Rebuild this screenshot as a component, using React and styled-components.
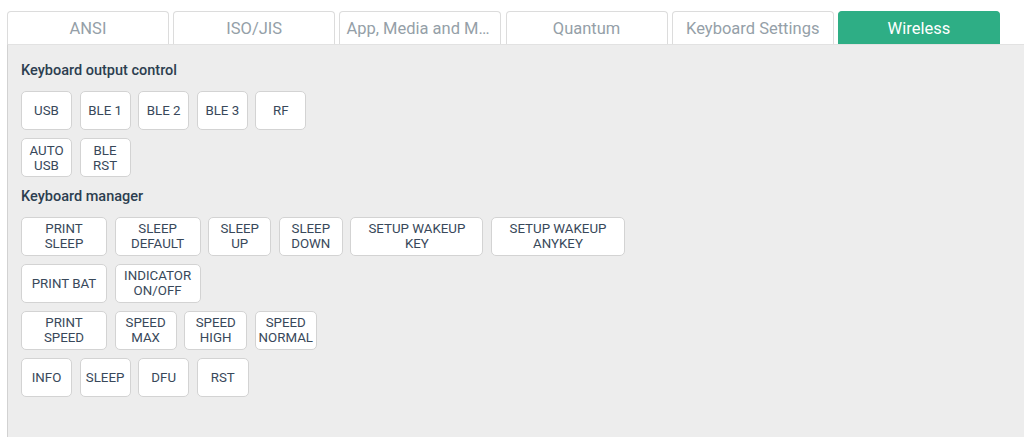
import React from 'react';
import styled, { createGlobalStyle } from 'styled-components';

const TABS = ['ANSI', 'ISO/JIS', 'App, Media and Mouse', 'Quantum', 'Keyboard Settings', 'Wireless'];
const ACTIVE_TAB = 'Wireless';

const SECTIONS = [
    {
        title: 'Keyboard output control',
        rows: [
            [['USB'], ['BLE 1'], ['BLE 2'], ['BLE 3'], ['RF']],
            [['AUTO', 'USB'], ['BLE', 'RST']],
        ],
    },
    {
        title: 'Keyboard manager',
        rows: [
            [
                ['PRINT', 'SLEEP', 86],
                ['SLEEP', 'DEFAULT', 86],
                ['SLEEP', 'UP', 63],
                ['SLEEP', 'DOWN', 64],
                ['SETUP WAKEUP', 'KEY', 133],
                ['SETUP WAKEUP', 'ANYKEY', 134],
            ],
            [['PRINT BAT', null, 86], ['INDICATOR', 'ON/OFF', 86]],
            [
                ['PRINT', 'SPEED', 86],
                ['SPEED', 'MAX', 62],
                ['SPEED', 'HIGH', 63],
                ['SPEED', 'NORMAL', 62],
            ],
            [['INFO'], ['SLEEP'], ['DFU'], ['RST', null, 52]],
        ],
    },
];

const GlobalStyle = createGlobalStyle`
    html, body {
        margin: 0;
        padding: 0;
        height: 100%;
        background: #ffffff;
        font-family: Roboto, "Liberation Sans", Arial, sans-serif;
    }
    #root {
        height: 100%;
    }
`;

const Page = styled.div`
    height: 437px;
    display: flex;
    flex-direction: column;
    padding: 11px 0 0 7px;
    box-sizing: border-box;
    overflow: hidden;
`;

const TabBar = styled.div`
    display: flex;
    gap: 4.2px;
    height: 33px;
`;

const Tab = styled.div`
    width: 162px;
    box-sizing: border-box;
    padding: 1px 6px 0;
    border: 1px solid ${(p) => (p.active ? '#2eae85' : '#dcdcdc')};
    border-bottom: none;
    border-radius: 4px 4px 0 0;
    background: ${(p) => (p.active ? '#2eae85' : '#ffffff')};
    color: ${(p) => (p.active ? '#ffffff' : '#959fa8')};
    font-size: 16.5px;
    line-height: 32px;
    text-align: center;
    white-space: nowrap;
    overflow: hidden;
    text-overflow: ellipsis;
`;

const Panel = styled.div`
    flex: 1;
    background: #ededed;
    border-left: 1px solid #d2d2d2;
    border-top: 1px solid #e2e2e2;
    padding: 16px 0 0 13px;
`;

const Section = styled.div`
    & + & {
        padding-top: 1.5px;
    }
`;

const SectionTitle = styled.div`
    font-size: 14.5px;
    font-weight: 500;
    line-height: 20px;
    color: #2c3e50;
    margin-bottom: 10px;
`;

const KeyRow = styled.div`
    display: flex;
    gap: 7.6px;
    margin-bottom: 8px;
`;

const Key = styled.div`
    width: ${(p) => p.w}px;
    height: 39px;
    box-sizing: border-box;
    background: #ffffff;
    border: 1.5px solid #d3d3d3;
    border-radius: 5px;
    display: flex;
    flex-direction: column;
    align-items: center;
    justify-content: center;
    color: #38485a;
    font-size: 13.3px;
    line-height: 15px;
    text-align: center;
    white-space: nowrap;
`;

const App = () => (
    <>
        <GlobalStyle />
        <Page>
            <TabBar>
                {TABS.map((t) => (
                    <Tab key={t} active={t === ACTIVE_TAB}>{t}</Tab>
                ))}
            </TabBar>
            <Panel>
                {SECTIONS.map((s) => (
                    <Section key={s.title}>
                        <SectionTitle>{s.title}</SectionTitle>
                        {s.rows.map((row, i) => (
                            <KeyRow key={i}>
                                {row.map(([a, b, w]) => (
                                    <Key key={a + (b || '')} w={w || 51}>
                                        <span>{a}</span>
                                        {b && <span>{b}</span>}
                                    </Key>
                                ))}
                            </KeyRow>
                        ))}
                    </Section>
                ))}
            </Panel>
        </Page>
    </>
);

export default App;
